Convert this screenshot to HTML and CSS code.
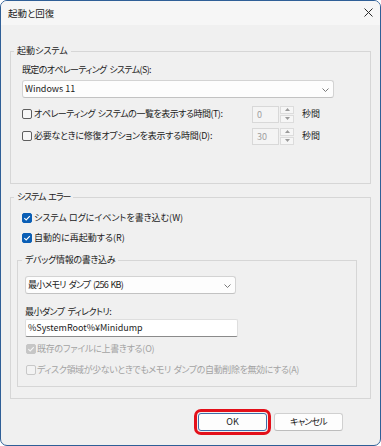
FILE: index.html
```html
<!DOCTYPE html>
<html lang="ja">
<head>
<meta charset="utf-8">
<title>起動と回復</title>
<link rel="stylesheet" href="styles.css">
</head>
<body>
<div class="window">
  <div class="titlebar">
    <span class="title">起動と回復</span>
    <svg class="close" width="9" height="9" viewBox="0 0 9 9"><path d="M0.5 0.5 L8.5 8.5 M8.5 0.5 L0.5 8.5" stroke="#2b2b2b" stroke-width="1" fill="none"/></svg>
  </div>
  <div class="content">
    <fieldset class="group g1">
      <legend>起動システム</legend>
      <div class="label l1">既定のオペレーティング システム(S):</div>
      <div class="combo c1"><span>Windows 11</span><svg class="chev" width="7" height="4" viewBox="0 0 7 4"><path d="M0.5 0.5 L3.5 3.5 L6.5 0.5" stroke="#6a6a6a" stroke-width="0.9" fill="none"/></svg></div>
      <div class="rows r1">
        <div class="row">
          <span class="cb"></span>
          <span class="rtext rt1">オペレーティング システムの一覧を表示する時間(T):</span>
          <div class="spin"><span class="spinval">0</span><div class="spinbtns"><span class="sb"><svg width="5" height="3" viewBox="0 0 5 3"><path d="M0 3 L2.5 0 L5 3Z" fill="#9a9a9a"/></svg></span><span class="sb"><svg width="5" height="3" viewBox="0 0 5 3"><path d="M0 0 L2.5 3 L5 0Z" fill="#9a9a9a"/></svg></span></div></div>
          <span class="unit">秒間</span>
        </div>
        <div class="row">
          <span class="cb"></span>
          <span class="rtext rt2">必要なときに修復オプションを表示する時間(D):</span>
          <div class="spin"><span class="spinval">30</span><div class="spinbtns"><span class="sb"><svg width="5" height="3" viewBox="0 0 5 3"><path d="M0 3 L2.5 0 L5 3Z" fill="#9a9a9a"/></svg></span><span class="sb"><svg width="5" height="3" viewBox="0 0 5 3"><path d="M0 0 L2.5 3 L5 0Z" fill="#9a9a9a"/></svg></span></div></div>
          <span class="unit">秒間</span>
        </div>
      </div>
    </fieldset>

    <fieldset class="group g2">
      <legend class="lg2">システム エラー</legend>
      <div class="rows r2">
        <div class="row">
          <span class="cb checked"><svg width="10" height="10" viewBox="0 0 10 10"><path d="M2.3 5.2 L4.2 7 L7.8 3.2" stroke="#fff" stroke-width="1.1" fill="none"/></svg></span>
          <span class="ctext">システム ログにイベントを書き込む(W)</span>
        </div>
        <div class="row">
          <span class="cb checked"><svg width="10" height="10" viewBox="0 0 10 10"><path d="M2.3 5.2 L4.2 7 L7.8 3.2" stroke="#fff" stroke-width="1.1" fill="none"/></svg></span>
          <span class="ctext">自動的に再起動する(R)</span>
        </div>
      </div>
      <fieldset class="group g3">
        <legend class="lg3">デバッグ情報の書き込み</legend>
        <div class="combo c2"><span>最小メモリ ダンプ (256 KB)</span><svg class="chev" width="7" height="4" viewBox="0 0 7 4"><path d="M0.5 0.5 L3.5 3.5 L6.5 0.5" stroke="#6a6a6a" stroke-width="0.9" fill="none"/></svg></div>
        <div class="label l2">最小ダンプ ディレクトリ:</div>
        <div class="input"><span>%SystemRoot%¥Minidump</span></div>
        <div class="rows r3">
          <div class="row">
            <span class="cb dchecked"><svg width="10" height="10" viewBox="0 0 10 10"><path d="M2.3 5.2 L4.2 7 L7.8 3.2" stroke="#f4f4f4" stroke-width="1.1" fill="none"/></svg></span>
            <span class="ctext dis d1">既存のファイルに上書きする(O)</span>
          </div>
          <div class="row">
            <span class="cb dis"></span>
            <span class="ctext dis d2">ディスク領域が少ないときでもメモリ ダンプの自動削除を無効にする(A)</span>
          </div>
        </div>
      </fieldset>
    </fieldset>

    <div class="buttons">
      <button class="btn ok">OK</button>
      <button class="btn cancel">キャンセル</button>
    </div>
  </div>
</div>
</body>
</html>
```

FILE: styles.css
```css
* { box-sizing: border-box; }
html, body { margin: 0; padding: 0; background: #ffffff; }
body {
  font-family: "Noto Sans CJK JP", "Noto Sans", sans-serif;
  font-size: 9px;
  font-feature-settings: "palt" 1;
  color: #1b1b1b;
}
.window {
  width: 381px;
  height: 446px;
  border: 1px solid #2f5f97;
  border-radius: 7px;
  background: #f0f0f0;
  overflow: hidden;
  display: flex;
  flex-direction: column;
}
.titlebar {
  height: 24px;
  flex: none;
  background: #f6f6f6;
  display: flex;
  align-items: center;
  justify-content: space-between;
  padding: 0 7px 0 7px;
}
.title { line-height: 14px; font-size: 9.5px; }
.close { display: block; margin-top: -1px; }
.content {
  padding: 0 9px;
  display: flex;
  flex-direction: column;
}
.group {
  margin: 0;
  border: 1px solid #d6d6d6;
  min-inline-size: 0;
}
.group legend {
  margin-left: -8px;
  padding: 0 3px;
  line-height: 16px;
  height: 16px;
}
.g3 legend { margin-left: -3px; }
.lg2 { letter-spacing: -1.1px; word-spacing: 2px; }
.lg3 { letter-spacing: -0.3px; }
.g1 { margin-top: 18px; padding: 3px 0 38px 11px; }
.g2 { margin-top: 5px; padding: 4px 0 11px 11px; }
.g3 { margin: 5px 0 0 -5px; width: 340px; padding: 8px 0 7px 7px; }
.label { line-height: 16px; height: 16px; margin-bottom: 2px; }
.l1 { letter-spacing: -0.65px; word-spacing: 1.5px; }
.l2 { line-height: 14px; height: 14px; margin: 11px 0 0 0; letter-spacing: -0.55px; word-spacing: 1.5px; }
.combo {
  height: 18px;
  background: #fdfdfd;
  border: 1px solid #d3d3d3;
  border-bottom-color: #c2c2c2;
  border-radius: 3px;
  display: flex;
  align-items: center;
  justify-content: space-between;
  padding: 0 4px 0 2px;
  line-height: 14px;
}
.c1 { width: 312px; }
.c2 { width: 211px; letter-spacing: -0.8px; word-spacing: 1.5px; }
.chev { display: block; margin-top: 1px; }
.input {
  width: 213px;
  height: 18px;
  background: #ffffff;
  border: 1px solid #dedede;
  border-bottom: 1px solid #8a8a8a;
  border-radius: 2px;
  display: flex;
  align-items: center;
  padding: 0 2px;
  line-height: 14px;
}
.rows { display: flex; flex-direction: column; }
.r1 { margin-top: 7px; gap: 4px; }
.r2 { gap: 2px; }
.r3 { margin-top: 3px; gap: 3px; padding-left: 1px; }
.row { height: 18px; display: flex; align-items: center; }
.cb {
  width: 10px;
  height: 10px;
  flex: none;
  border: 1px solid #5e5e5e;
  border-radius: 2px;
  background: #f7f7f7;
  margin-right: 2px;
  position: relative;
}
.cb svg { display: block; position: absolute; left: -1px; top: -1px; }
.cb.checked { background: #0a5eb5; border-color: #0a5eb5; }
.cb.dchecked { background: #c6c6c6; border-color: #c6c6c6; }
.cb.dis { border-color: #c8c8c8; background: #f3f3f3; }
.ctext { line-height: 14px; white-space: nowrap; }
.r3 .cb { margin-right: 1px; }
.dis { color: #a3a3a3; }
.d1 { letter-spacing: -0.25px; }
.d2 { letter-spacing: -0.38px; word-spacing: 1px; }
.rtext { width: 218px; line-height: 14px; white-space: nowrap; }
.rt1 { letter-spacing: -0.5px; word-spacing: 1px; }
.rt2 { letter-spacing: -0.25px; }
.spin { width: 42px; height: 17px; display: flex; }
.spinval {
  flex: 1;
  border: 1px solid #d8d8d8;
  background: #f4f4f4;
  color: #a0a0a0;
  line-height: 15px;
  padding-left: 4px;
}
.spinbtns { width: 15px; display: flex; flex-direction: column; gap: 1px; padding: 0 0 0 1px; }
.sb {
  flex: 1;
  border: 1px solid #dcdcdc;
  background: #f6f6f6;
  display: flex;
  align-items: center;
  justify-content: center;
}
.sb svg { display: block; }
.unit { margin-left: 8px; line-height: 14px; }
.buttons {
  margin-top: 14px;
  margin-right: 28px;
  display: flex;
  justify-content: flex-end;
  gap: 7px;
}
.btn {
  width: 69px;
  height: 18px;
  font: inherit;
  font-feature-settings: "palt" 1;
  color: #1b1b1b;
  background: #fdfdfd;
  border: 1px solid #d0d0d0;
  border-bottom-color: #bdbdbd;
  border-radius: 3px;
  padding: 0;
  line-height: 14px;
}
.cancel { letter-spacing: -0.8px; }
.btn.ok {
  border-color: #3d6ea8;
  outline: 3px solid #e3101a;
  outline-offset: 1px;
}
```
